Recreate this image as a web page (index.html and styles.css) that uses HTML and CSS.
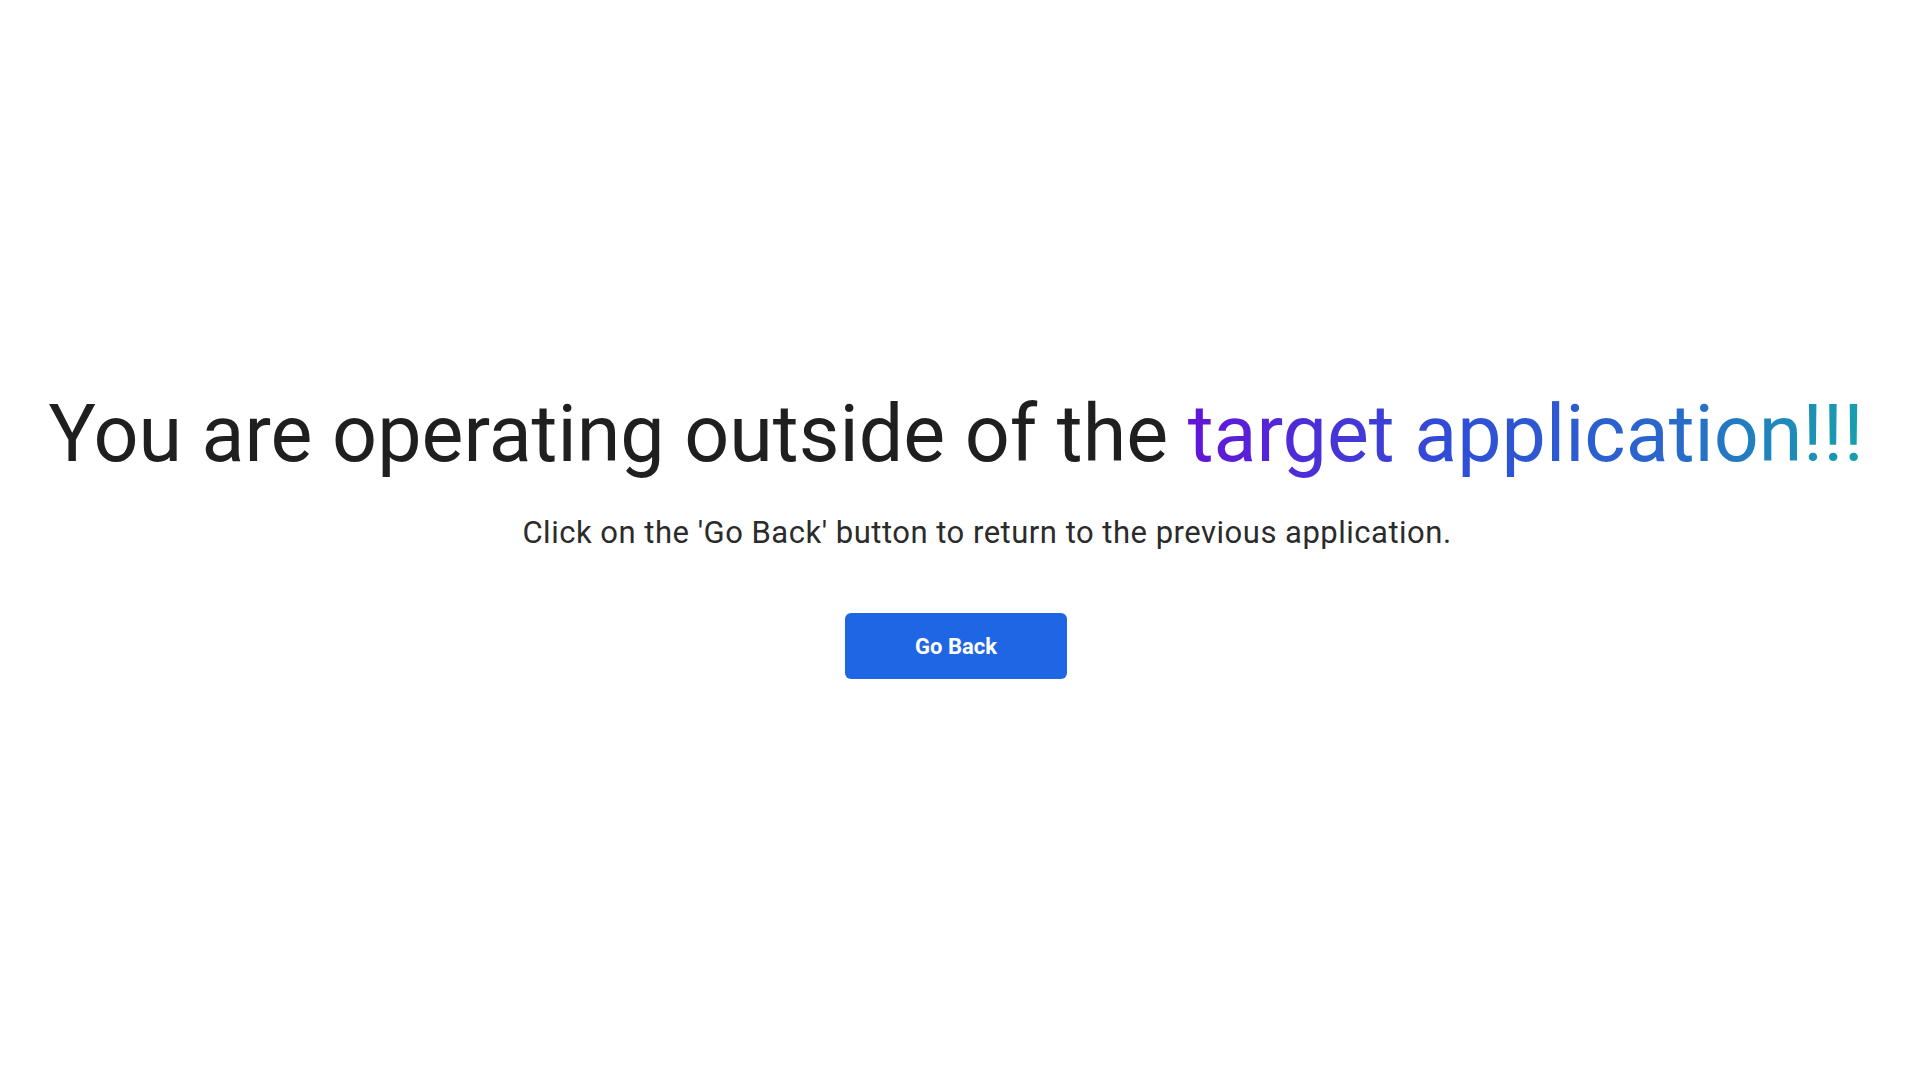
FILE: index.html
```html
<!DOCTYPE html>
<html lang="en">
<head>
<meta charset="utf-8">
<title>Outside target application</title>
<link rel="stylesheet" href="styles.css">
</head>
<body>
<main class="page">
  <h1 class="title">You are operating outside of the <span class="accent">target application!!!</span></h1>
  <p class="subtitle">Click on the 'Go Back' button to return to the previous application.</p>
  <button class="btn" type="button">Go Back</button>
</main>
</body>
</html>
```
FILE: styles.css
```css
html, body {
  margin: 0;
  padding: 0;
  background: #ffffff;
}
.page {
  min-height: 100vh;
  display: flex;
  flex-direction: column;
  align-items: center;
  justify-content: center;
  font-family: Roboto, "Open Sans", sans-serif;
  box-sizing: border-box;
  padding: 0 8px 15px 0;
}
.title {
  margin: 0;
  font-size: 79px;
  font-weight: 400;
  line-height: 96px;
  color: #1f1f1f;
  white-space: nowrap;
  letter-spacing: 0;
}
.accent {
  background: linear-gradient(90deg, #6414d8 0%, #2f4fd6 40%, #2a66cc 70%, #17a0ad 100%);
  -webkit-background-clip: text;
  background-clip: text;
  color: transparent;
}
.subtitle {
  margin: 31px 0 0;
  padding-left: 62px;
  font-size: 31px;
  line-height: 40px;
  letter-spacing: 0.5px;
  color: #2b2b2b;
}
.btn {
  margin-top: 60px;
  width: 222px;
  height: 66px;
  border: none;
  border-radius: 6px;
  background: #1f66e5;
  color: #ffffff;
  font-family: Roboto, sans-serif;
  font-weight: 700;
  font-size: 22px;
  cursor: pointer;
}
```
